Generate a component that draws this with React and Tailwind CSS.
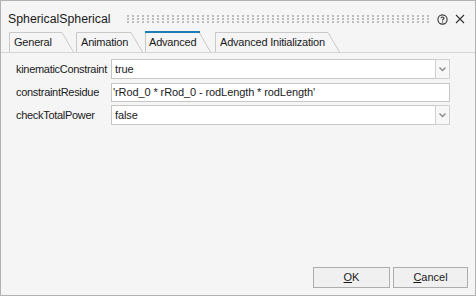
import React from "react";

const font = { fontFamily: '"Liberation Sans", Arial, sans-serif' };

function Tab({ label, width, active, pl }) {
  const h = active ? 21 : 20;
  return (
    <div className={`relative shrink-0 ${active ? "h-[21px]" : "h-[20px]"}`} style={{ width }}>
      <svg className="absolute inset-0" width={width} height={h}>
        <path
          d={`M0.5 ${h} V${active ? 1 : 0.5} H${width - 12} L${width - 0.5} ${h}`}
          fill="none"
          stroke="#c9c9c9"
          strokeWidth="1"
        />
        {active && <line x1="0" y1="1" x2={width - 11} y2="1" stroke="#1d7eb6" strokeWidth="2" />}
      </svg>
      <span
        className="relative block text-[11px] tracking-[-0.2px] leading-[20px] text-[#1a1a1a] whitespace-nowrap"
        style={{ paddingLeft: pl, paddingTop: active ? 1 : 0 }}
      >
        {label}
      </span>
    </div>
  );
}

function Chevron() {
  return (
    <svg width="7" height="5" viewBox="0 0 7 5">
      <path d="M0.5 0.5 L3.5 3.5 L6.5 0.5" fill="none" stroke="#8c8c8c" strokeWidth="1.4" />
    </svg>
  );
}

function Combo({ value }) {
  return (
    <div className="flex h-[20px] w-[339px] border border-[#c6c6c6] bg-white">
      <div className="flex-1 pl-[3px] text-[11px] tracking-[-0.1px] leading-[18px] text-[#1a1a1a]">{value}</div>
      <div className="w-[15px] -my-[1px] -mr-[1px] h-[20px] border border-[#d0d0d0] bg-[#f7f7f7] flex items-center justify-center">
        <Chevron />
      </div>
    </div>
  );
}

function Label({ children }) {
  return (
    <div className="w-[95px] shrink-0 whitespace-nowrap text-[11px] tracking-[-0.3px] text-[#1a1a1a]">
      {children}
    </div>
  );
}

export default function App() {
  return (
    <div
      className="w-[476px] h-[296px] bg-[#f5f5f5] border border-[#b2b2b2] flex flex-col overflow-hidden"
      style={font}
    >
      {/* header */}
      <div className="h-[30px] flex items-center pl-[7px] pr-[8px] pt-[6px]">
        <span className="text-[12.3px] text-[#1a1a1a] whitespace-nowrap">SphericalSpherical</span>
        <svg className="ml-[16px]" width="303" height="9">
          <defs>
            <pattern id="dots" width="5" height="3" patternUnits="userSpaceOnUse">
              <rect x="0" y="0" width="2" height="2" fill="#bdbdbd" />
            </pattern>
          </defs>
          <rect x="0" y="0" width="303" height="8" fill="url(#dots)" />
        </svg>
        <div className="flex-1" />
        <svg width="11" height="11" viewBox="0 0 11 11" className="mr-[7px]">
          <circle cx="5.5" cy="5.5" r="4.6" fill="none" stroke="#333" strokeWidth="1.1" />
          <path d="M4 4.2 C4 2.6 7 2.6 7 4.2 C7 5.3 5.5 5.3 5.5 6.5" fill="none" stroke="#333" strokeWidth="1.1" />
          <rect x="5" y="7.4" width="1.1" height="1.1" fill="#333" />
        </svg>
        <svg width="10" height="10" viewBox="0 0 10 10" className="mr-[2px]">
          <path d="M1 1 L9 9 M9 1 L1 9" stroke="#333" strokeWidth="1.1" />
        </svg>
      </div>

      {/* tabs */}
      <div className="h-[22px] flex items-end pl-[8px] border-b border-[#d6d6d6]">
        <Tab label="General" width={65} pl={5} />
        <div className="w-[2px]" />
        <Tab label="Animation" width={67} pl={5} />
        <div className="w-[2px]" />
        <Tab label="Advanced" width={66} pl={4} active />
        <div className="w-[4px]" />
        <Tab label="Advanced Initialization" width={125} pl={5} />
      </div>

      {/* content */}
      <div className="flex-1 flex flex-col pt-[6px] pl-[15px]">
        <div className="flex items-center h-[20px]">
          <Label>kinematicConstraint</Label>
          <Combo value="true" />
        </div>
        <div className="flex items-center h-[19px] mt-[4px]">
          <Label>constraintResidue</Label>
          <div className="h-[19px] w-[339px] border border-[#c6c6c6] bg-white pl-[1px] text-[11px] tracking-[-0.1px] leading-[17px] text-[#1a1a1a] whitespace-nowrap">
            'rRod_0 * rRod_0 - rodLength * rodLength'
          </div>
        </div>
        <div className="flex items-center h-[20px] mt-[3px]">
          <Label>checkTotalPower</Label>
          <Combo value="false" />
        </div>
      </div>

      {/* buttons */}
      <div className="flex justify-end gap-[3px] pr-[7px] pb-[7px]">
        <button className="w-[77px] h-[21px] border border-[#adadad] bg-[#f0f0f0] text-[11px] text-[#1a1a1a]">
          <span className="underline underline-offset-1">O</span>K
        </button>
        <button className="w-[75px] h-[21px] border border-[#adadad] bg-[#f0f0f0] text-[11px] text-[#1a1a1a]">
          <span className="underline underline-offset-1">C</span>ancel
        </button>
      </div>
    </div>
  );
}
